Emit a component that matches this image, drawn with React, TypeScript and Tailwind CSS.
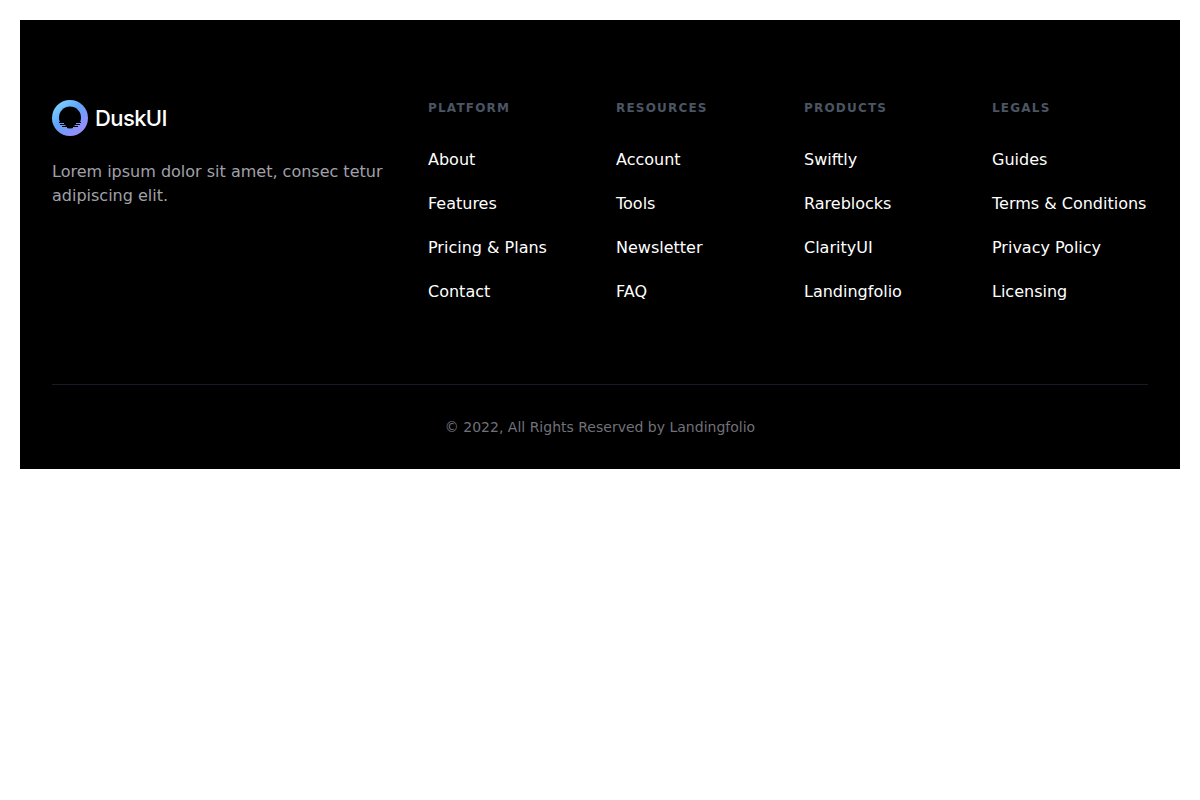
const columns = [
  { title: 'Platform', links: ['About', 'Features', 'Pricing & Plans', 'Contact'] },
  { title: 'Resources', links: ['Account', 'Tools', 'Newsletter', 'FAQ'] },
  { title: 'Products', links: ['Swiftly', 'Rareblocks', 'ClarityUI', 'Landingfolio'] },
  { title: 'Legals', links: ['Guides', 'Terms & Conditions', 'Privacy Policy', 'Licensing'] },
];

function Logo() {
  return (
    <div className="flex h-9 items-center gap-[7px]">
      <svg width="36" height="36" viewBox="0 0 36 36" fill="none">
        <defs>
          <linearGradient id="ring" x1="5" y1="3" x2="31" y2="33" gradientUnits="userSpaceOnUse">
            <stop offset="0" stopColor="#7dd3fc" />
            <stop offset="0.4" stopColor="#60a5fa" />
            <stop offset="1" stopColor="#9d8bfa" />
          </linearGradient>
        </defs>
        <circle cx="18" cy="18" r="18" fill="url(#ring)" />
        <circle cx="18" cy="17.5" r="11" fill="#000" />
        {/* banded lower edge of the hole */}
        <path d="M7 22.5h22M8 24.5h20M10 26.5h16" stroke="#000" strokeWidth="1" />
        <path d="M7 23.5h5M24 23.5h5M8.5 25.5h5M22.5 25.5h5M11 27.5h4M21 27.5h4" stroke="url(#ring)" strokeWidth="1" />
      </svg>
      <span className="font-['Inter',sans-serif] text-[22px] font-medium leading-none tracking-[-0.6px] text-white">
        DuskUI
      </span>
    </div>
  );
}

export default function App() {
  return (
    <div className="p-5 font-['DejaVu_Sans',sans-serif]">
      <footer className="bg-black px-8 pb-8 pt-20">
        <div className="grid grid-cols-6 gap-x-8">
          <div className="col-span-2">
            <Logo />
            <p className="mt-6 text-base leading-6 text-[#a1a1aa]">
              Lorem ipsum dolor sit amet, consec tetur adipiscing elit.
            </p>
          </div>
          {columns.map((col) => (
            <div key={col.title}>
              <h6 className="text-xs font-bold uppercase tracking-widest text-[#4b5563]">{col.title}</h6>
              <ul className="mt-8 flex flex-col gap-5">
                {col.links.map((link) => (
                  <li key={link} className="whitespace-nowrap text-base leading-6 text-white">
                    {link}
                  </li>
                ))}
              </ul>
            </div>
          ))}
        </div>
        <hr className="mt-20 border-[#1a1a26]" />
        <p className="mt-8 text-center text-sm text-[#71717a]">© 2022, All Rights Reserved by Landingfolio</p>
      </footer>
    </div>
  );
}
